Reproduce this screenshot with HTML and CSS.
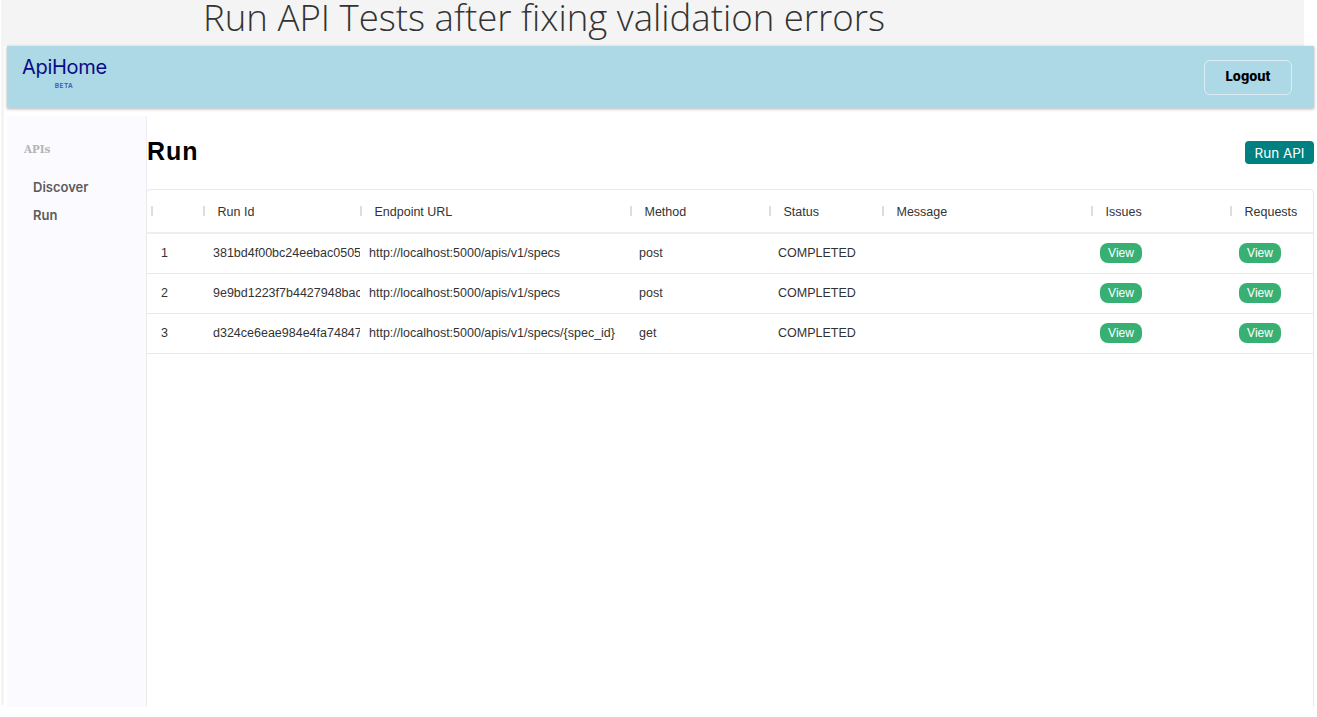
FILE: index.html
```html
<!DOCTYPE html>
<html lang="en">
<head>
<meta charset="utf-8">
<title>Run API Tests</title>
<link rel="stylesheet" href="styles.css">
</head>
<body>
<div class="banner"><h1 class="banner-title">Run API Tests after fixing validation errors</h1></div>
<div class="frame">
  <header class="topbar">
    <div class="brand">
      <div class="brand-name">ApiHome</div>
      <div class="brand-tag">BETA</div>
    </div>
    <button class="logout" type="button">Logout</button>
  </header>
  <div class="body-row">
    <nav class="sidebar">
      <div class="side-label">APIs</div>
      <a class="side-link side-link-first">Discover</a>
      <a class="side-link">Run</a>
    </nav>
    <main class="content">
      <div class="content-head">
        <h2 class="page-title">Run</h2>
        <button class="run-btn" type="button">Run API</button>
      </div>
      <div class="table-card">
        <table class="runs">
          <colgroup>
            <col class="c-num"><col class="c-id"><col class="c-url"><col class="c-method"><col class="c-status"><col class="c-msg"><col class="c-issues"><col class="c-req">
          </colgroup>
          <thead>
            <tr>
              <th class="th-num"></th>
              <th>Run Id</th>
              <th>Endpoint URL</th>
              <th>Method</th>
              <th>Status</th>
              <th>Message</th>
              <th>Issues</th>
              <th>Requests</th>
            </tr>
          </thead>
          <tbody>
            <tr>
              <td class="td-num">1</td>
              <td class="td-id"><div class="clip">381bd4f00bc24eebac05056</div></td>
              <td>http://localhost:5000/apis/v1/specs</td>
              <td>post</td>
              <td>COMPLETED</td>
              <td></td>
              <td><button class="view" type="button">View</button></td>
              <td><button class="view" type="button">View</button></td>
            </tr>
            <tr>
              <td class="td-num">2</td>
              <td class="td-id"><div class="clip">9e9bd1223f7b4427948bac</div></td>
              <td>http://localhost:5000/apis/v1/specs</td>
              <td>post</td>
              <td>COMPLETED</td>
              <td></td>
              <td><button class="view" type="button">View</button></td>
              <td><button class="view" type="button">View</button></td>
            </tr>
            <tr>
              <td class="td-num">3</td>
              <td class="td-id"><div class="clip">d324ce6eae984e4fa74847</div></td>
              <td>http://localhost:5000/apis/v1/specs/{spec_id}</td>
              <td>get</td>
              <td>COMPLETED</td>
              <td></td>
              <td><button class="view" type="button">View</button></td>
              <td><button class="view" type="button">View</button></td>
            </tr>
          </tbody>
        </table>
      </div>
    </main>
  </div>
</div>
</body>
</html>
```
FILE: styles.css
```css
* { box-sizing: border-box; }
html, body { margin: 0; padding: 0; background: #fff; overflow: hidden; height: 100%; }
body { font-family: "Liberation Sans", Arial, sans-serif; color: #333; }

.banner {
  margin-left: 1px;
  width: 1303px;
  height: 46px;
  background: #f4f4f4;
  padding-left: 202px;
}
.banner-title {
  margin: 0;
  font-family: "Open Sans", sans-serif;
  font-weight: 300;
  font-size: 36.6px;
  line-height: 35px;
  color: #333;
  white-space: nowrap;
}

.frame {
  width: 1314px;
  height: 661px;
  margin-left: 1px;
  padding-left: 6px;
  background: linear-gradient(to right, #f4f4f4 3px, #fff 3px) no-repeat 0 0 / 100% 659px;
}

.topbar {
  width: 1307px;
  height: 62px;
  background: #add8e6;
  box-shadow: 0 1px 3px rgba(0, 0, 0, .3);
  display: flex;
  justify-content: space-between;
  align-items: flex-start;
  padding: 8px 22px 0 15px;
}
.brand { width: 84px; text-align: center; }
.brand-name {
  font-family: "Inter", sans-serif;
  font-size: 20px;
  font-weight: 400;
  line-height: 26px;
  color: #0b0b85;
  white-space: nowrap;
  letter-spacing: -.3px;
}
.brand-tag {
  font-family: "Inter", sans-serif;
  font-size: 6.5px;
  font-weight: 600;
  line-height: 8px;
  margin-top: 2px;
  color: #3f55b5;
  letter-spacing: .4px;
}
.logout {
  width: 88px;
  height: 35px;
  margin-top: 6px;
  padding: 0 0 3px;
  background: transparent;
  border: 1px solid rgba(255, 255, 255, .55);
  border-radius: 6px;
  font-family: "Inter", sans-serif;
  font-size: 13px;
  font-weight: 800;
  color: #000;
}

.body-row {
  display: flex;
  height: 591px;
  margin-top: 8px;
}
.sidebar {
  width: 140px;
  flex: none;
  background: #fbfaff;
  border-right: 1px solid #eeedf2;
  padding: 27px 0 0 17px;
  display: flex;
  flex-direction: column;
  align-items: flex-start;
}
.side-label {
  font-family: "DejaVu Serif", serif;
  font-size: 10.3px;
  font-weight: 700;
  line-height: 12px;
  color: #b5b5b5;
}
.side-link {
  font-family: "Inter", sans-serif;
  font-size: 13px;
  font-weight: 600;
  line-height: 16px;
  color: #5c5c5c;
  margin: 12px 0 0 9px;
}
.side-link-first { margin-top: 24px; }

.content { width: 1167px; flex: none; }
.content-head {
  display: flex;
  justify-content: space-between;
  align-items: center;
  height: 73px;
}
.page-title {
  margin: 0 0 3px;
  font-size: 25px;
  font-weight: 700;
  letter-spacing: 1px;
  color: #000;
}
.run-btn {
  width: 69px;
  height: 23px;
  background: #008080;
  color: #fff;
  border: 0;
  border-radius: 4px;
  font-family: "Inter", sans-serif;
  font-size: 13.5px;
  padding: 0;
}

.table-card {
  height: 518px;
  margin-left: -1px;
  width: 1168px;
  background: #fff;
  border: 1px solid #eaeaea;
  border-bottom: 0;
  border-radius: 4px 4px 0 0;
}
.runs {
  width: 1166px;
  table-layout: fixed;
  border-collapse: collapse;
  font-size: 12.5px;
  color: #333;
}
.c-num { width: 56px; }
.c-id { width: 157px; }
.c-url { width: 270px; }
.c-method { width: 139px; }
.c-status { width: 113px; }
.c-msg { width: 209px; }
.c-issues { width: 139px; }
.c-req { width: 83px; }

.runs th {
  height: 43px;
  padding: 1px 0 0 14.5px;
  text-align: left;
  font-weight: 400;
  white-space: nowrap;
  position: relative;
  border-bottom: 2px solid #eeeeee;
}
.runs th::before {
  content: "";
  position: absolute;
  left: 0;
  top: 16px;
  width: 2px;
  height: 10px;
  background: #dddddd;
}
.runs .th-num::before { left: 4px; }
.runs td {
  height: 40px;
  padding: 0 0 0 9px;
  border-bottom: 1px solid #e8e8e8;
  white-space: nowrap;
}
.runs .td-num { padding-left: 14px; }
.runs .td-id { padding-left: 10px; }
.clip { overflow: hidden; }
.view {
  display: block;
  width: 42px;
  height: 20px;
  padding: 0;
  border: 0;
  border-radius: 8px;
  background: #38b074;
  color: #fff;
  font-family: "Liberation Sans", Arial, sans-serif;
  font-size: 12px;
}
```
